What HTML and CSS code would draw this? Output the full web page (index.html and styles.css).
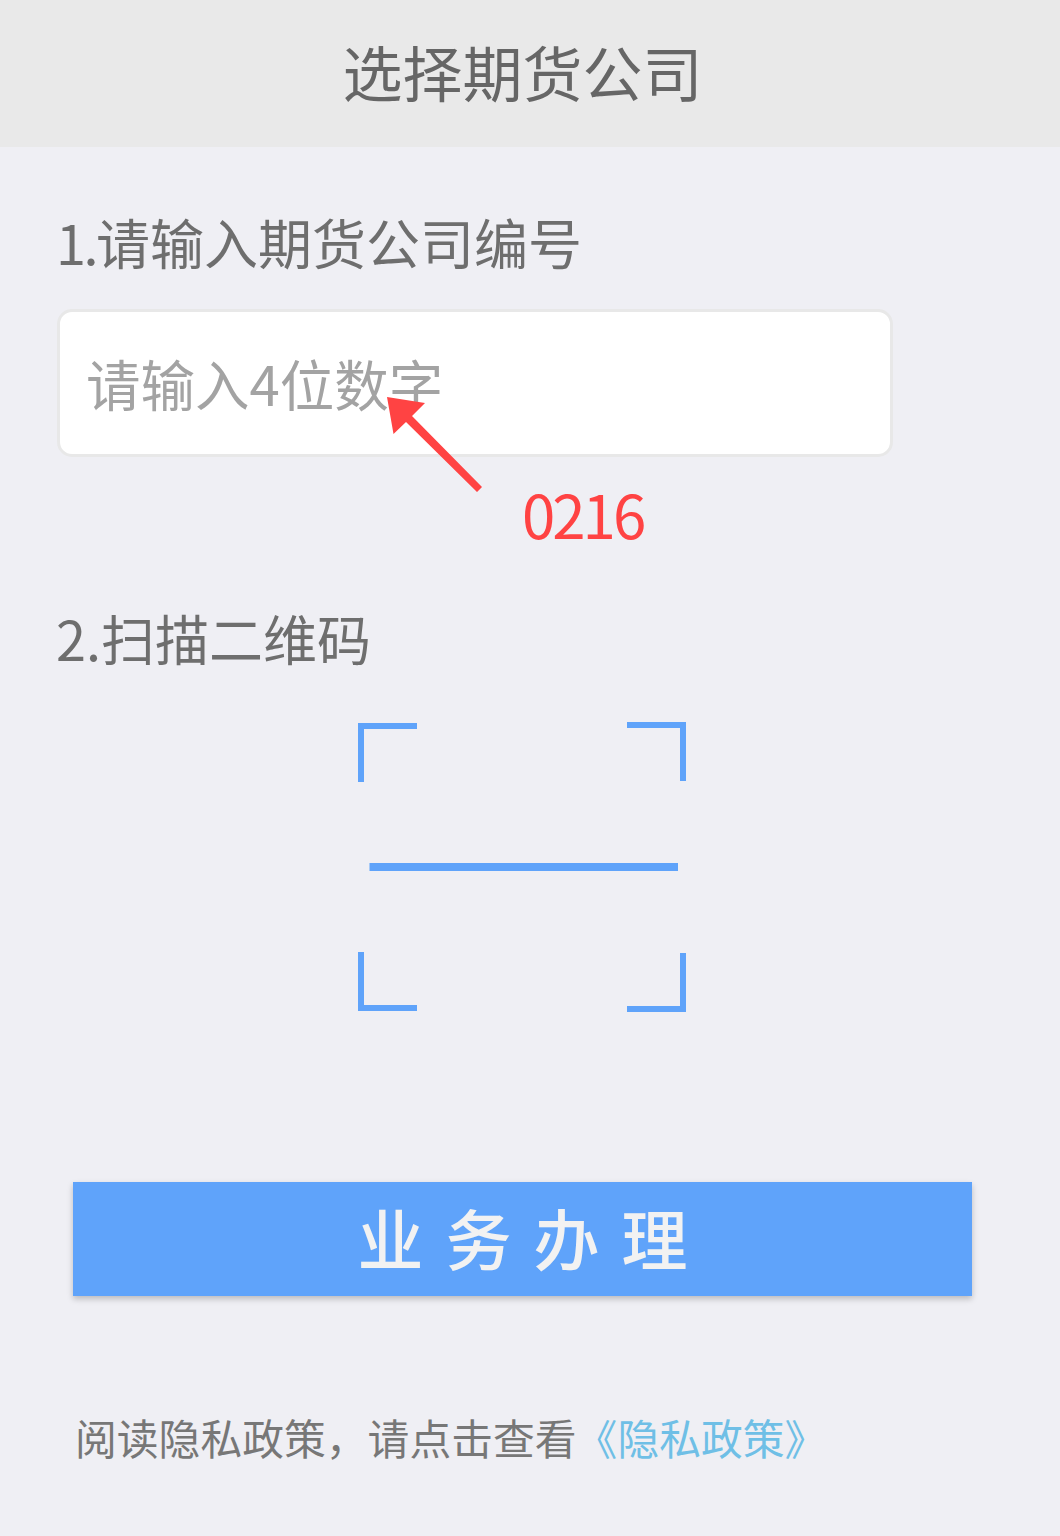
FILE: index.html
```html
<!DOCTYPE html>
<html lang="zh-CN">
<head>
<meta charset="utf-8">
<title>选择期货公司</title>
<link rel="stylesheet" href="styles.css">
</head>
<body>
<div class="page">
  <header class="top-bar"><h1 class="top-title">选择期货公司</h1></header>
  <main class="content">
    <h2 class="step-label step-one"><span class="step-number">1.</span>请输入期货公司编号</h2>
    <div class="code-input"><span class="placeholder">请输入4位数字</span></div>
    <h2 class="step-label step-two">2.扫描二维码</h2>
    <svg class="scan-icon" viewBox="0 0 330 292" width="330" height="292" aria-label="扫描">
      <g fill="none" stroke="#5fa3fa" stroke-width="6">
        <path d="M4 62V6H60"/>
        <path d="M270 5H326V61"/>
        <path d="M4 232V288H60"/>
        <path d="M270 289H326V233"/>
      </g>
      <rect x="12.500" y="143" width="308.500" height="8" fill="#5fa3fa"/>
    </svg>
    <button class="action-button" type="button">业务办理</button>
    <p class="privacy">阅读隐私政策，请点击查看<a class="privacy-link">《隐私政策》</a></p>
  </main>
  <svg class="annotation-arrow" viewBox="0 0 1060 1536" width="1060" height="1536" aria-hidden="true">
    <polygon fill="#ff4343" points="387,397 425,403 412,416 482,487 477,492 406,422 393.500,434"/>
  </svg>
  <span class="annotation-code">0216</span>
</div>
</body>
</html>
```
FILE: styles.css
```css
* { box-sizing: border-box; }
html, body { margin: 0; padding: 0; }
body {
  width: 1060px;
  height: 1536px;
  overflow: hidden;
  background: #efeff4;
  font-family: "Noto Sans CJK SC", "Noto Sans", sans-serif;
}
.page { position: relative; width: 1060px; height: 1536px; }
.top-bar {
  height: 147px;
  background: #e9e9e9;
  display: flex;
  align-items: center;
  justify-content: center;
}
.top-title {
  margin: 0 0 6px -15px;
  font-size: 60px;
  font-weight: 400;
  line-height: 1;
  color: #666;
}
.content { display: flex; flex-direction: column; align-items: flex-start; padding-left: 56px; }
.step-label {
  margin: 0;
  font-size: 54px;
  font-weight: 400;
  line-height: 64px;
  color: #6e6e6e;
}
.step-number { letter-spacing: -2.500px; }
.step-one { margin-top: 63px; }
.step-two { margin-top: 149px; }
.code-input {
  margin-top: 35px;
  margin-left: 1px;
  width: 836px;
  height: 148px;
  padding-left: 26px;
  display: flex;
  align-items: center;
  background: #fff;
  border: 3px solid #e8e8e8;
  border-radius: 15px;
}
.placeholder { font-size: 54.500px; line-height: 64px; color: #a3a3a3; }
.scan-icon { display: block; margin: 50px 0 0 301px; }
.action-button {
  display: block;
  margin: 170px 0 0 17px;
  width: 899px;
  height: 114px;
  padding: 0 0 6px 22px;
  border: 0;
  background: #5fa3fa;
  box-shadow: 0 3px 6px rgba(0, 0, 0, .22);
  color: #f2f2f2;
  font-family: inherit;
  font-size: 66px;
  font-weight: 500;
  line-height: 1;
  letter-spacing: 22px;
}
.privacy {
  margin: 113px 0 0 19px;
  font-size: 41.800px;
  line-height: 56px;
  color: #777;
  white-space: nowrap;
  text-spacing-trim: space-all;
}
.privacy-link { margin-left: -1px; color: #6fbfe6; }
.annotation-arrow { position: absolute; left: 0; top: 0; pointer-events: none; }
.annotation-code {
  position: absolute;
  left: 522px;
  top: 470px;
  font-size: 60px;
  line-height: 86px;
  letter-spacing: -3px;
  color: #ff4343;
}
```
